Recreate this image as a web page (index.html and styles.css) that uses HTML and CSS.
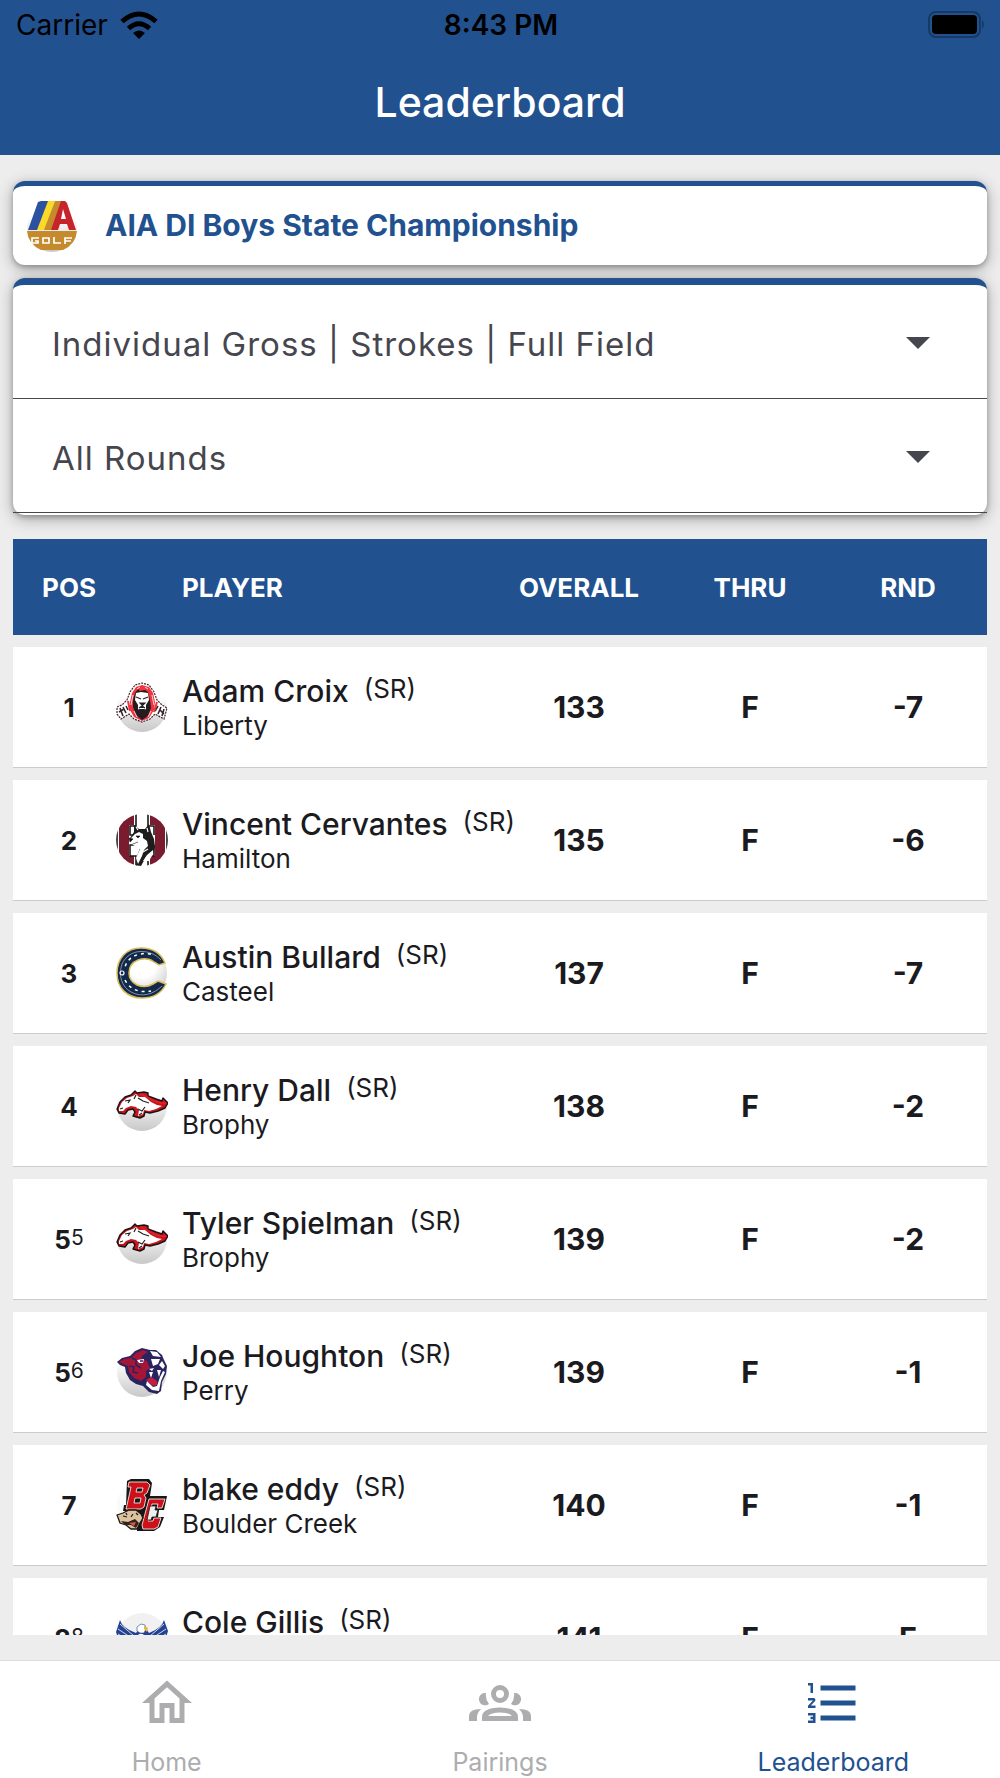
FILE: index.html
```html
<!DOCTYPE html>
<html lang="en">
<head>
<meta charset="utf-8">
<meta name="viewport" content="width=device-width, initial-scale=1">
<title>Leaderboard</title>
<link rel="stylesheet" href="styles.css">
</head>
<body>
<svg class="sprite" aria-hidden="true">
  <defs>
    <radialGradient id="ball" cx=".5" cy=".3" r=".72">
      <stop offset="0" stop-color="#fff"/>
      <stop offset=".4" stop-color="#fff"/>
      <stop offset="1" stop-color="#c6c6c6"/>
    </radialGradient>
    <linearGradient id="shade" x1="0" y1="0" x2="0" y2="1">
      <stop offset=".3" stop-color="#fff"/>
      <stop offset="1" stop-color="#c8c8c8"/>
    </linearGradient>
    <clipPath id="disc"><circle cx="26" cy="26" r="26"/></clipPath>
    <symbol id="bronco" viewBox="0 0 52 52">
      <circle cx="26" cy="26" r="25" fill="url(#shade)"/>
      <path d="M1 29 4 22 9 17 15 15 19 11 21 13 28 12 32 13 32 16 40 19 46 21 47 18 52 23 49 28 42 31 34 33 29 32 28 36 24 38 17 36 19 32 17 29 12 30 9 34 3 33Z" fill="#c9151e" stroke="#1b1214" stroke-width="1.4" stroke-linejoin="round"/>
      <path d="M3 28 6 22 11 18 17 16 20 14 23 17 29 17 35 22 41 25 46 26 40 29 33 31 28 30 27 34 22 36 23 30 20 27 15 26 10 28 7 31 3 31Z" fill="#fff"/>
      <path d="M9 21 14 20 12 23M22 18 27 21 33 23M22 29 26 31 29 27M4 29 7 28M20 15 18 19M23 35 26 33" fill="none" stroke="#222" stroke-width="1.2"/>
      <path d="M24 14 31 17 38 21 45 23 50 23" fill="none" stroke="#e02027" stroke-width="1.8"/>
    </symbol>
  </defs>
</svg>
<div class="app">
  <header class="topbar">
    <div class="status">
      <div class="status-left">
        <span>Carrier</span>
        <svg class="wifi" viewBox="0 0 38 28" aria-hidden="true">
          <g fill="none" stroke="#000" stroke-width="5"><path d="M2 10.500Q19-4.500 36 10.500"/><path d="M8.500 17.500Q19 8 29.500 17.500"/></g>
          <path d="M13 22Q19 17 25 22L19 28Z"/>
        </svg>
      </div>
      <span class="clock">8:43 PM</span>
      <svg class="battery" viewBox="0 0 58 28" aria-hidden="true">
        <rect x="1" y="1" width="51" height="25" rx="7" fill="none" stroke="#163a66" stroke-width="2"/>
        <rect x="4" y="4" width="45" height="19" rx="4"/>
        <path d="M54 9Q58 13 54 18Z" fill="#163a66"/>
      </svg>
    </div>
    <h1>Leaderboard</h1>
  </header>

  <main class="content">
    <section class="event card">
      <svg class="event-logo" viewBox="0 0 52 52" aria-hidden="true">
        <circle cx="26" cy="27" r="25" fill="url(#shade)"/>
        <path d="M12 2 15 1H23L12 30H2Z" fill="#2a52a0"/>
        <path d="M22 1H29L19 30H11Z" fill="#fbd928"/>
        <path d="M29 1H36L26 30H18Z" fill="#c48a2c"/>
        <path fill-rule="evenodd" d="M35 1H39L41 3 50 30H43L41 24H34L32 30H25ZM37 9 35 19H40Z" fill="#c8222b"/>
        <path d="M1 31H51Q50 44 37 50H15Q2 44 1 31Z" fill="#c48a2c"/>
        <path d="M13 38H6V43H12V41H9M17 38H23V43H17ZM28 37V43H35M46 38H39V44M39 41H45" fill="none" stroke="#fff" stroke-width="1.7"/>
      </svg>
      <h2>AIA DI Boys State Championship</h2>
    </section>

    <form class="filters card">
      <div class="field">
        <select aria-label="Leaderboard type"><option>Individual Gross | Strokes | Full Field</option></select>
        <svg class="caret" viewBox="0 0 24 12" aria-hidden="true"><path d="M0 0H24L12 12Z"/></svg>
      </div>
      <div class="field">
        <select aria-label="Round"><option>All Rounds</option></select>
        <svg class="caret" viewBox="0 0 24 12" aria-hidden="true"><path d="M0 0H24L12 12Z"/></svg>
      </div>
    </form>

    <div class="board">
      <table>
        <colgroup><col class="c-pos"><col class="c-logo"><col class="c-player"><col class="c-overall"><col class="c-thru"><col class="c-rnd"></colgroup>
        <thead>
          <tr><th class="pos">POS</th><td></td><th class="player">PLAYER</th><th>OVERALL</th><th>THRU</th><th>RND</th></tr>
        </thead>
        <tbody>
          <tr>
            <td class="pos">1</td>
            <td><svg class="logo" viewBox="0 0 52 52" aria-hidden="true">
              <circle cx="26" cy="26" r="25" fill="url(#shade)"/>
              <path d="M1 26 6 24 11 19 14 11 19 4 26 2 33 4 38 11 41 19 46 24 51 27 48 38 39 33 34 38 26 41 18 38 13 33 5 38 1 33Z" fill="#fff" stroke="#45262b" stroke-width="1.2" stroke-dasharray="2 1"/>
              <path d="M16 12 20 6 26 4 33 6 37 12 39 21 38 29 33 37 26 40 18 36 14 29 14 21Z" fill="#ef3340"/>
              <path d="M19 12 22 8 24 10 29 9 32 11 34 19 35 27 32 35 26 39 20 34 17 26 17 19Z" fill="#241c1f"/>
              <path d="M20 12 25 11 32 12 33 19 30 24 30 28 26 31 22 28 22 24 19 19Z" fill="#fff"/>
              <path d="M20 16 25 18M32 16 27 18M24 22H29L26.500 24.500ZM23 27 26 25 29 27M26 24V27" fill="#222" stroke="#222" stroke-width="1.200"/>
              <path d="M23 28H29L28 34 26 37 24 34Z" fill="#241c1f"/>
              <path d="M17 14 15 24M18 30 21 36M36 14 38 24M35 30 32 36M21 8 24 6M29 6 32 8" stroke="#fff" stroke-width=".8"/>
              <path d="M4 27 7 35M7 26 10 32M10 25 12 29M42 25 39 30M45 26 42 33M48 28 46 35M3 31 8 28M44 29 48 33" stroke="#33282b" stroke-width="1.6"/>
              <path d="M12 20 14 30M41 21 38 31" stroke="#ef3340" stroke-width="2"/>
            </svg></td>
            <td class="player"><span class="name">Adam Croix <small>(SR)</small></span><span class="school">Liberty</span></td>
            <td>133</td><td>F</td><td>-7</td>
          </tr>
          <tr>
            <td class="pos">2</td>
            <td><svg class="logo" viewBox="0 0 52 52" aria-hidden="true">
              <g clip-path="url(#disc)">
                <path d="M0 0H52V52H0Z" fill="#fff"/>
                <path d="M3 0H18V11H13V42H18V52H3ZM34 0H49V52H34V42H39V11H34Z" fill="#7b1b30"/>
                <path d="M1 14V38M51 14V38M20 0V12H14V21H19V31H14V42H20V52M32 0V12H38V21M38 31V42H32V52" fill="none" stroke="#171717" stroke-width="1.600"/>
                <path d="M18 18 18 11 23 15 29 15 33 10 35 18 38 25 39 33 37 39 30 43 25 52 20 52 21 42 24 34 17 31 14 24Z" fill="#1d1d1d"/>
                <path d="M14 25 19 20 23 18 27 20 27 24 31 27 32 32 28 36 26 42 22 50 20 44 24 35 17 31Z" fill="#fff"/>
                <path d="M27 47 31 41 37 36 37 40 33 47Z" fill="#fff"/>
                <path d="M13 24 17 25 14 28ZM20 22 24 22 22 24ZM17 30 22 28" fill="#111" stroke="#111" stroke-width=".6"/>
                <path d="M20 13 22 16M31 14 32 18M27 38 32 35" stroke="#fff" stroke-width="1.200"/>
              </g>
            </svg></td>
            <td class="player"><span class="name">Vincent Cervantes <small>(SR)</small></span><span class="school">Hamilton</span></td>
            <td>135</td><td>F</td><td>-6</td>
          </tr>
          <tr>
            <td class="pos">3</td>
            <td><svg class="logo" viewBox="0 0 52 52" aria-hidden="true">
              <circle cx="26" cy="26" r="25" fill="url(#ball)"/>
              <g fill="none">
                <path d="M49 16C44 4 34 1 25 1 10 1 1 12 1 26 1 41 11 51 26 51 37 51 45 47 50 37L42 34 37 37C32 40 26 40 21 38 15 35 13 30 13 26 13 19 17 15 22 13 28 11 34 12 38 15L43 18Z" fill="#13294b" stroke="#d8bc55" stroke-width="1.500"/>
                <path d="M45 13C34 1 13 1 6 17 2 29 6 40 15 45 26 51 38 47 46 39" stroke="#aeb8c6" stroke-width=".7"/>
                <path d="M35 7C22 5 12 10 9 20M9 33C14 43 24 46 35 44" stroke="#fff" stroke-width="1.500" stroke-dasharray="3 4"/>
                <circle cx="6" cy="26" r="2" stroke="#fff" stroke-width="1.200"/>
              </g>
            </svg></td>
            <td class="player"><span class="name">Austin Bullard <small>(SR)</small></span><span class="school">Casteel</span></td>
            <td>137</td><td>F</td><td>-7</td>
          </tr>
          <tr>
            <td class="pos">4</td>
            <td><svg class="logo" aria-hidden="true"><use href="#bronco"/></svg></td>
            <td class="player"><span class="name">Henry Dall <small>(SR)</small></span><span class="school">Brophy</span></td>
            <td>138</td><td>F</td><td>-2</td>
          </tr>
          <tr>
            <td class="pos">5<sup>5</sup></td>
            <td><svg class="logo" aria-hidden="true"><use href="#bronco"/></svg></td>
            <td class="player"><span class="name">Tyler Spielman <small>(SR)</small></span><span class="school">Brophy</span></td>
            <td>139</td><td>F</td><td>-2</td>
          </tr>
          <tr>
            <td class="pos">5<sup>6</sup></td>
            <td><svg class="logo" viewBox="0 0 52 52" aria-hidden="true">
              <circle cx="26" cy="26" r="25" fill="url(#shade)"/>
              <path d="M1 16 6 12 14 10 19 5 26 2 34 4 40 4 46 9 48 14 51 20 50 28 46 36 45 45 41 48 33 46 27 40 20 38 14 34 10 27 9 21 4 19Z" fill="#29235f"/>
              <path d="M3 16 8 13 15 12 20 7 27 4 32 6 27 9 25 12 31 15 34 22 30 25 30 31 25 35 18 32 13 26 12 20 7 18Z" fill="#a51538"/>
              <path d="M34 5 41 6 45 11 37 10ZM21 14 28 13 27 17 23 17ZM35 13 44 13 42 18 37 20ZM46 15 49 20 47 23 43 19ZM33 23 38 22 36 25Z" fill="#fff"/>
              <path d="M47 25 49 26 45 35 43 45 36 44 30 39 31 35 37 41 41 40 44 31Z" fill="#fff"/>
              <path d="M33 26 35 32 37 26ZM41 24 43 31 45 24Z" fill="#fff"/>
              <path d="M30 34 35 31 41 35 41 39 37 40Z" fill="#c61c3d"/>
              <path d="M13 20 18 21 17 26 22 27M16 12 20 14 20 19 25 22M24 15H27" fill="none" stroke="#29235f" stroke-width="1.500"/>
            </svg></td>
            <td class="player"><span class="name">Joe Houghton <small>(SR)</small></span><span class="school">Perry</span></td>
            <td>139</td><td>F</td><td>-1</td>
          </tr>
          <tr>
            <td class="pos">7</td>
            <td><svg class="logo" viewBox="0 0 52 52" aria-hidden="true">
              <circle cx="26" cy="26" r="25" fill="#fafafa"/>
              <path d="M11 2 15 0H33L36 4 34 17H51L48 31H43L42 38H48L44 48 38 52H21L22 32H7L8 26H10Z" fill="#161616"/>
              <path fill-rule="evenodd" d="M13 3H31L34 6 31 14 28 16 30 19 28 28 25 30H10L11 26 15 8H12ZM21 9 20 13H26L27 9ZM19 19 18 24H24L25 19ZM33 20H49L46 29H41L42 25H36L32 42H37L38 39H45L42 48 38 50H27L26 46Z" fill="#cf1018" stroke="#fff" stroke-width=".8"/>
              <path d="M34 27H40L39 31H42L40 38H36L35 41H31Z" fill="#eee" stroke="#161616" stroke-width=".8"/>
              <path d="M1 36 7 34 13 31 20 31 25 35 27 39 24 44 21 50 15 50 10 46 4 44Z" fill="#dcc29d" stroke="#1d1715" stroke-width="1.300"/>
              <path d="M7 37 11 38M17 35 15 38M20 34 22 36M10 34 11 36" stroke="#221b19" stroke-width="1.200"/>
              <path d="M5 42 12 43 19 40 23 44 20 49 15 46 9 46Z" fill="#35201d"/>
              <path d="M13 44 20 43 18 47Z" fill="#d35c5b"/>
            </svg></td>
            <td class="player"><span class="name">blake eddy <small>(SR)</small></span><span class="school">Boulder Creek</span></td>
            <td>140</td><td>F</td><td>-1</td>
          </tr>
          <tr>
            <td class="pos">8<sup>8</sup></td>
            <td><svg class="logo" viewBox="0 0 52 52" aria-hidden="true">
              <circle cx="26" cy="26" r="25" fill="#f1f1f1"/>
              <path d="M4 8Q6 16 20 21L22 18 31 18 33 21Q46 16 48 8L52 19 49 29 36 32 26 44 16 32 3 29 0 20Z" fill="#234293"/>
              <path d="M4 12 18 24M2 17 17 27M2 22 16 30M48 12 34 24M50 17 35 27M50 22 36 30" stroke="#fff" stroke-width=".8"/>
              <path d="M21 15 25 12 29 13 30 17 28 21 24 21 21 19Z" fill="#fff" stroke="#234293" stroke-width=".6"/>
              <path d="M28 14 32 16 31 20 28 17Z" fill="#e8b43a"/>
              <circle cx="25" cy="26" r="3.500" fill="#234293" stroke="#fff" stroke-width="1.500"/>
            </svg></td>
            <td class="player"><span class="name">Cole Gillis <small>(SR)</small></span></td>
            <td>141</td><td>F</td><td>E</td>
          </tr>
        </tbody>
      </table>
    </div>
  </main>

  <nav class="tabs">
    <a href="#home">
      <svg viewBox="0 0 24 24" aria-hidden="true"><path d="M12 5.690 17 10.190V18H15V12H9V18H7V10.190ZM12 3 2 12H5V20H11V14H13V20H19V12H22Z"/></svg>
      <span>Home</span>
    </a>
    <a href="#pairings">
      <svg viewBox="0 0 60 60" aria-hidden="true">
        <circle cx="30" cy="21" r="6.500" fill="none" stroke="currentColor" stroke-width="5"/>
        <path d="M16 20A6.200 6.200 0 1 0 19 31Q15 26 16 20ZM44 20A6.200 6.200 0 1 1 41 31Q45 26 44 20Z"/>
        <path d="M-1 48V43Q-1 36 11 36Q7 40 7 44V48ZM61 48V43Q61 36 49 36Q53 40 53 44V48Z"/>
        <path fill-rule="evenodd" d="M12 48V44Q12 35 30 34.500 48 35 48 44V48ZM18 43H42Q39 39.500 30 39.500 21 39.500 18 43Z"/>
      </svg>
      <span>Pairings</span>
    </a>
    <a href="#leaderboard" class="active" aria-current="page">
      <svg viewBox="0 0 24 24" aria-hidden="true"><path d="M7 5H21V7H7ZM7 13V11H21V13ZM4 4V8H3V5H2V4ZM2 17V16H5V20H2V19H4V18.500H3V17.500H4V17ZM4.250 10a.75.75 0 0 1 .52 1.270L3.120 13H5V14H2V13.080L4 11H2V10ZM7 19V17H21V19Z"/></svg>
      <span>Leaderboard</span>
    </a>
  </nav>
</div>
</body>
</html>
```
FILE: styles.css
```css
* { box-sizing: border-box; }

body {
  margin: 0;
  background: #ededed;
  color: #1b1b1f;
  font-family: Inter, "Liberation Sans", sans-serif;
}

h1, h2 { margin: 0; }

.sprite { position: absolute; width: 0; height: 0; }

.app {
  display: flex;
  flex-direction: column;
  height: 100vh;
}

.topbar {
  flex: none;
  background: #21518f;
  padding-bottom: 29px;
}

.status {
  display: grid;
  grid-template-columns: 1fr auto 1fr;
  align-items: center;
  height: 50px;
  padding: 0 14px 0 16px;
  color: #000;
  font-size: 28px;
}

.status-left { display: flex; align-items: center; gap: 12px; }
.wifi { width: 38px; height: 28px; }
.clock { font-weight: 600; }
.battery { width: 58px; height: 28px; justify-self: end; }

.topbar h1 {
  padding-top: 28px;
  color: #fff;
  font-size: 41px;
  font-weight: 500;
  line-height: 48px;
  text-align: center;
}

.content {
  flex: 1;
  min-height: 0;
  display: flex;
  flex-direction: column;
  padding: 26px 13px 25px;
}

.card {
  flex: none;
  background: #fff;
  border-top: 5px solid #21518f;
  border-radius: 12px;
  box-shadow: 0 4px 16px rgba(0, 0, 0, .3), 0 2px 5px rgba(0, 0, 0, .25);
}

.event {
  display: flex;
  align-items: center;
  gap: 27px;
  height: 84px;
  padding: 0 13px;
}

.event-logo { width: 52px; height: 52px; }
.event h2 { color: #21518f; font-size: 30px; font-weight: 700; line-height: 36px; padding-bottom: 2px; }

.filters {
  margin-top: 13px;
  padding-bottom: 2px;
  border-top-width: 7px;
}

.field {
  position: relative;
  height: 114px;
  border-bottom: 1px solid #46464f;
}

.field select {
  width: 100%;
  height: 100%;
  padding: 4px 90px 0 39px;
  border: 0;
  background: transparent;
  color: #46464f;
  font: 33px Inter, "Liberation Sans", sans-serif;
  letter-spacing: 1px;
  appearance: none;
}

.caret {
  position: absolute;
  top: 50%;
  right: 57px;
  width: 24px;
  height: 12px;
  margin-top: -5px;
  fill: #46464f;
  pointer-events: none;
}

.board {
  flex: 1;
  min-height: 0;
  margin-top: 12px;
  overflow: hidden;
}

table {
  width: 100%;
  table-layout: fixed;
  border-spacing: 0 12px;
}

.c-pos { width: 103px; }
.c-logo { width: 66px; }
.c-overall { width: 184px; }
.c-thru, .c-rnd { width: 158px; }

th, td { padding: 0; text-align: center; }

thead tr { height: 96px; background: #21518f; color: #fff; }
th { font-size: 26px; font-weight: 700; }

tbody tr { height: 121px; background: #fff; }

tbody td {
  border-bottom: 1px solid #cbcbd0;
  font-size: 30px;
  font-weight: 700;
}

th.pos, td.pos { padding-left: 9px; }
tbody td.pos { font-size: 26px; }
.pos sup { font-size: 21px; font-weight: 400; line-height: 1; vertical-align: 4px; }

.logo { display: block; width: 52px; height: 52px; }

th.player, td.player { text-align: left; white-space: nowrap; }
td.player { height: 121px; padding-top: 25px; vertical-align: top; }
.name, .school { display: block; }
.name { font-size: 30px; font-weight: 500; line-height: 38px; }
.name small { margin-left: 7px; font-size: 26px; font-weight: 400; line-height: 1; vertical-align: 4px; }
.school { font-size: 26px; font-weight: 400; line-height: 32px; }

.tabs {
  flex: none;
  display: grid;
  grid-template-columns: repeat(3, 1fr);
  height: 118px;
  border-top: 1px solid #dcdcdc;
  background: #fff;
}

.tabs a {
  display: flex;
  flex-direction: column;
  align-items: center;
  gap: 13px;
  padding-top: 12px;
  color: #adadaf;
  font-size: 25px;
  line-height: 32px;
  text-decoration: none;
}

.tabs svg { width: 60px; height: 60px; fill: currentColor; overflow: visible; }
.tabs .active { color: #21518f; }
```
